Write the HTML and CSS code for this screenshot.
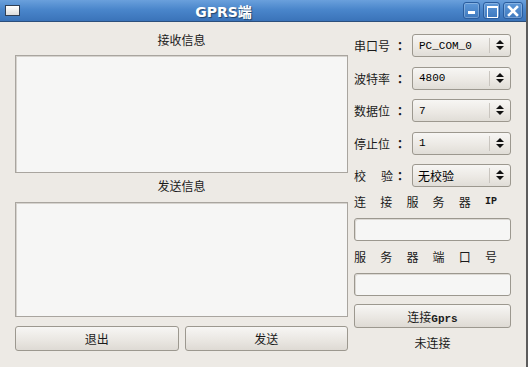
FILE: index.html
```html
<!DOCTYPE html>
<html lang="zh">
<head>
  <meta charset="UTF-8" />
  <title>GPRS端</title>
  <link rel="stylesheet" href="styles.css">
</head>
<body>

  <div class="window">
    <!-- Barra de título -->
    <div class="titlebar">
      <div class="win-icon"></div>
      <div class="win-title">GPRS端</div>
      <div class="win-buttons">
        <span class="win-btn btn-min"></span>
        <span class="win-btn btn-max"></span>
        <span class="win-btn btn-close">
          <svg width="12" height="12" viewBox="0 0 12 12"><path d="M2 2 L10 10 M10 2 L2 10" stroke="#fff" stroke-width="2.6" stroke-linecap="square"/></svg>
        </span>
      </div>
    </div>

    <div class="content">
      <!-- Columna izquierda -->
      <div class="left">
        <div class="section-label">接收信息</div>
        <div class="textbox recv"></div>
        <div class="section-label second">发送信息</div>
        <div class="textbox send"></div>
        <div class="left-buttons">
          <button class="push">退出</button>
          <button class="push">发送</button>
        </div>
      </div>

      <!-- Columna derecha -->
      <div class="right">
        <div class="field">
          <span class="field-label"><span class="name">串口号</span><span class="colon">：</span></span>
          <div class="combo"><span class="combo-value">PC_COM_0</span><span class="spin"></span></div>
        </div>
        <div class="field">
          <span class="field-label"><span class="name">波特率</span><span class="colon">：</span></span>
          <div class="combo"><span class="combo-value">4800</span><span class="spin"></span></div>
        </div>
        <div class="field">
          <span class="field-label"><span class="name">数据位</span><span class="colon">：</span></span>
          <div class="combo"><span class="combo-value">7</span><span class="spin"></span></div>
        </div>
        <div class="field">
          <span class="field-label"><span class="name">停止位</span><span class="colon">：</span></span>
          <div class="combo"><span class="combo-value">1</span><span class="spin"></span></div>
        </div>
        <div class="field">
          <span class="field-label"><span class="name spaced"><span>校</span><span>验</span></span><span class="colon">：</span></span>
          <div class="combo"><span class="combo-value cjk">无校验</span><span class="spin"></span></div>
        </div>

        <div class="spread-label">
          <span>连</span><span>接</span><span>服</span><span>务</span><span>器</span><span class="latin">IP</span>
        </div>
        <div class="lineedit"></div>

        <div class="spread-label">
          <span>服</span><span>务</span><span>器</span><span>端</span><span>口</span><span>号</span>
        </div>
        <div class="lineedit"></div>

        <button class="push connect">连接<span class="latin">Gprs</span></button>
        <div class="status">未连接</div>
      </div>
    </div>
  </div>

</body>
</html>
```

FILE: styles.css
```css
/* ================================
   Variables
================================= */
:root {
  --bg: #edeae5;
  --field-bg: #f6f6f5;
  --border: #a9a59f;
  --text: #1a1a1a;
  --font-cjk: "Noto Sans CJK SC", "DejaVu Sans", sans-serif;
  --font-mono: "Liberation Mono", "DejaVu Sans Mono", monospace;
}

* {
  margin: 0;
  padding: 0;
  box-sizing: border-box;
}

body {
  background: var(--bg);
  font-family: var(--font-cjk);
  color: var(--text);
}

/* ================================
   Ventana
================================= */
.window {
  width: 528px;
  height: 367px;
  background: var(--bg);
  border-right: 2px solid #5c5c5c;
  overflow: hidden;
}

.titlebar {
  height: 22px;
  display: flex;
  align-items: center;
  background: linear-gradient(#6aa0dc, #4a86cb 45%, #3a73b9);
  border-bottom: 1px solid #2c4f7c;
  padding: 0 3px 0 5px;
}

.win-icon {
  width: 15px;
  height: 11px;
  background: linear-gradient(#ffffff, #dcdcdc);
  border: 1px solid #2f3f55;
  margin-top: -1px;
}

.win-title {
  flex: 1;
  text-align: center;
  color: #fff;
  font-family: "DejaVu Sans", var(--font-cjk);
  font-weight: bold;
  font-size: 14px;
  text-shadow: 1px 1px 1px rgba(0,0,0,0.45);
  padding-right: 36px;
}

.win-buttons {
  display: flex;
  gap: 3px;
}

.win-btn {
  width: 17px;
  height: 17px;
  border: 1px solid #2a5d9e;
  border-radius: 3px;
  background: linear-gradient(#5e98d8, #3e79bf);
  box-shadow: inset 0 0 0 1px rgba(255,255,255,0.25);
  position: relative;
  display: flex;
  align-items: center;
  justify-content: center;
}

.btn-close {
  width: 20px;
}

.btn-min::after {
  content: "";
  position: absolute;
  left: 4px;
  bottom: 4px;
  width: 7px;
  height: 3px;
  background: #fff;
}

.btn-max::after {
  content: "";
  position: absolute;
  left: 3px;
  top: 3px;
  width: 9px;
  height: 9px;
  border: 1px solid #fff;
  border-top-width: 2px;
}

/* ================================
   Contenido
================================= */
.content {
  display: flex;
  gap: 6px;
  padding-left: 15px;
}

.left {
  width: 333px;
  padding-top: 8px;
  display: flex;
  flex-direction: column;
}

.section-label {
  font-size: 12px;
  line-height: 20px;
  height: 20px;
  text-align: center;
  margin-bottom: 5px;
}

.section-label.second {
  margin-top: 3px;
  margin-bottom: 6px;
}

.textbox {
  background: var(--field-bg);
  border: 1px solid var(--border);
  box-shadow: inset 1px 1px 0 #d6d3ce;
}

.recv { height: 118px; }
.send { height: 115px; }

.left-buttons {
  display: flex;
  gap: 6px;
  margin-top: 9px;
}

.left-buttons .push {
  flex: 1;
  height: 25px;
}

.push {
  font-family: var(--font-cjk);
  font-size: 12px;
  color: var(--text);
  border: 1px solid #9c988f;
  border-radius: 3px;
  background: linear-gradient(#f7f6f4, #e9e6e1 60%, #dedad4);
  cursor: pointer;
}

/* ================================
   Columna derecha
================================= */
.right {
  width: 157px;
  padding-top: 12px;
  display: flex;
  flex-direction: column;
}

.field {
  display: flex;
  align-items: center;
  height: 23px;
  margin-bottom: 9.5px;
}

.field-label {
  width: 58px;
  padding-right: 6px;
  font-size: 12px;
  display: flex;
  justify-content: space-between;
}

.name.spaced {
  display: flex;
  width: 39px;
  justify-content: space-between;
}

/* los dos puntos centrados como en la fuente original */
.colon {
  width: 12px;
  text-align: center;
  font-family: "Noto Sans CJK TC", sans-serif;
  font-weight: bold;
}

.combo {
  flex: 1;
  height: 100%;
  display: flex;
  align-items: center;
  border: 1px solid #9c988f;
  border-radius: 3px;
  background: linear-gradient(#f7f6f4, #ebe8e3 60%, #e0ddd7);
}

.combo-value {
  flex: 1;
  padding-left: 6px;
  font-family: var(--font-mono);
  font-size: 11px;
  color: #000;
}

.combo-value.cjk {
  font-family: var(--font-cjk);
  font-size: 12px;
  padding-left: 5px;
}

.spin {
  width: 21px;
  height: 15px;
  border-left: 1px solid #c9c5bf;
  position: relative;
}

/* flechas arriba / abajo */
.spin::before,
.spin::after {
  content: "";
  position: absolute;
  left: 6px;
  border-left: 4px solid transparent;
  border-right: 4px solid transparent;
}

.spin::before {
  top: 2px;
  border-bottom: 4px solid #111;
}

.spin::after {
  top: 8px;
  border-top: 4px solid #111;
}

.spread-label {
  width: 143px;
  display: flex;
  justify-content: space-between;
  align-items: center;
  font-size: 12px;
  line-height: 20px;
  margin-top: -4.5px;
  margin-bottom: 6px;
}

.lineedit + .spread-label {
  margin-top: 6px;
}

.latin {
  font-family: var(--font-mono);
  font-weight: bold;
  font-size: 10px;
}

.lineedit {
  height: 23px;
  background: var(--field-bg);
  border: 1px solid #9c988f;
  border-radius: 3px;
  box-shadow: inset 1px 1px 0 #dcd9d4;
}

.connect {
  height: 24px;
  margin-top: 8px;
}

.connect .latin {
  font-size: 11px;
}

.status {
  font-size: 12px;
  line-height: 20px;
  text-align: center;
  margin-top: 5px;
}
```
